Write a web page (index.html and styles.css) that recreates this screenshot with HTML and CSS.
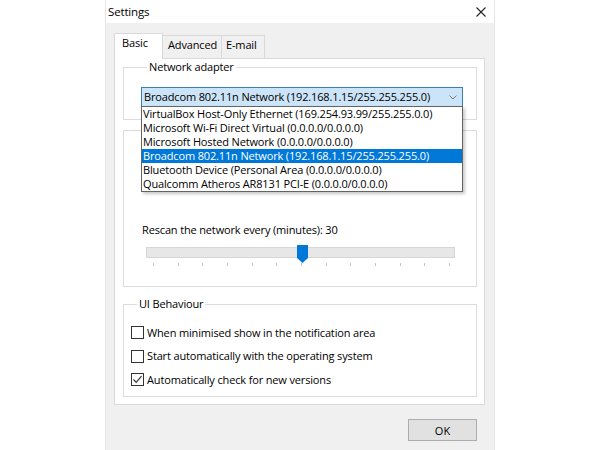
FILE: index.html
```
<!DOCTYPE html>
<html>
<head>
<meta charset="utf-8">
<link rel="stylesheet" href="styles.css">
</head>
<body>
<div class="window">
  <div class="titlebar">
    <span class="title">Settings</span>
    <svg class="close" width="10" height="10" viewBox="0 0 10 10"><path d="M0.5 0.5 L9.5 9.5 M9.5 0.5 L0.5 9.5" stroke="#222" stroke-width="1.1" fill="none"/></svg>
  </div>
  <div class="body">
    <div class="tabs">
      <div class="tab tab-basic active">Basic</div>
      <div class="tab tab-adv">Advanced</div>
      <div class="tab tab-mail">E-mail</div>
    </div>
    <div class="panel">
      <fieldset class="group group-adapter">
        <legend>Network adapter</legend>
        <div class="combo-wrap">
          <div class="combo">
            <span class="combo-text">Broadcom 802.11n Network (192.168.1.15/255.255.255.0)</span>
            <svg class="chev" width="8" height="5" viewBox="0 0 8 5"><path d="M0.5 0.5 L4 4 L7.5 0.5" stroke="#7a7a7a" stroke-width="1" fill="none"/></svg>
          </div>
          <ul class="dropdown">
            <li>VirtualBox Host-Only Ethernet (169.254.93.99/255.255.0.0)</li>
            <li>Microsoft Wi-Fi Direct Virtual (0.0.0.0/0.0.0.0)</li>
            <li>Microsoft Hosted Network (0.0.0.0/0.0.0.0)</li>
            <li class="selected">Broadcom 802.11n Network (192.168.1.15/255.255.255.0)</li>
            <li>Bluetooth Device (Personal Area (0.0.0.0/0.0.0.0)</li>
            <li>Qualcomm Atheros AR8131 PCI-E (0.0.0.0/0.0.0.0)</li>
          </ul>
        </div>
      </fieldset>
      <fieldset class="group group-scan">
        <legend>Scan</legend>
        <div class="rescan-label">Rescan the network every (minutes): 30</div>
        <div class="slider">
          <div class="track"></div>
          <div class="thumb" style="left:151px"><svg width="11" height="18" viewBox="0 0 11 18"><path d="M0 0 H11 V13 L5.5 18 L0 13 Z" fill="#0078d7"/></svg></div>
          <div class="ticks">
            <i></i><i></i><i></i><i></i><i></i><i></i><i></i><i></i><i></i><i></i><i></i><i></i><i></i>
          </div>
        </div>
      </fieldset>
      <fieldset class="group group-ui">
        <legend>UI Behaviour</legend>
        <label class="check"><span class="box"></span>When minimised show in the notification area</label>
        <label class="check"><span class="box"></span>Start automatically with the operating system</label>
        <label class="check"><span class="box"><svg width="11" height="11" viewBox="0 0 11 11"><path d="M1.5 5.5 L4.2 8.3 L9.5 2.2" stroke="#333" stroke-width="1.2" fill="none"/></svg></span>Automatically check for new versions</label>
      </fieldset>
    </div>
    <div class="footer">
      <button class="ok">OK</button>
    </div>
  </div>
</div>
</body>
</html>
```
FILE: styles.css
```
* { box-sizing: border-box; }
html, body { margin: 0; padding: 0; background: #fff; }
body {
  font-family: "Open Sans", "Noto Sans", sans-serif;
  font-size: 11px;
  letter-spacing: -0.15px;
  color: #000;
}
.window {
  margin-left: 105px;
  width: 390px;
  height: 450px;
  background: #f0f0f0;
  border-left: 1px solid #e6e6e6;
  border-right: 1px solid #e6e6e6;
}
.titlebar {
  height: 23px;
  background: #fff;
  display: flex;
  align-items: center;
  justify-content: space-between;
  padding: 0 8px 0 2px;
}
.title { line-height: 16px; font-size: 11.5px; }
.body {
  padding: 10px 9px 0 8px;
}
.tabs {
  display: flex;
  align-items: flex-end;
  height: 25px;
}
.tab {
  height: 23px;
  line-height: 18px;
  border: 1px solid #d9d9d9;
  border-bottom: none;
  background: #f0f0f0;
  padding-left: 5px;
  margin-left: -1px;
  white-space: nowrap;
}
.tab-basic { width: 49px; padding-left: 7px; margin-left: 0; }
.tab-adv { width: 60px; }
.tab-mail { width: 44px; padding-left: 4px; }
.tab.active {
  background: #fff;
  position: relative;
  z-index: 1;
  margin-bottom: -1px;
  height: 26px;
  line-height: 18px;
}
.panel {
  width: 371px;
  height: 347px;
  background: #fff;
  border: 1px solid #d9d9d9;
  padding: 0 7px 0 8px;
}
.group {
  margin: 0;
  padding: 0;
  border: 1px solid #dcdcdc;
  min-width: 0;
}
.group legend {
  margin-left: 6px;
  padding: 0 2px;
  line-height: 16px;
  height: 16px;
}
.group-adapter { padding: 12px 13px 12px 17px; }
.group-scan { margin-top: 2px; height: 165px; padding: 0 21px 0 22px; }
.group-ui { margin-top: 9px; height: 101px; padding: 9px 8px 0 7px; }

.combo-wrap { position: relative; }
.combo {
  height: 20px;
  border: 1px solid #3c7fb1;
  background: #cce4f7;
  display: flex;
  align-items: center;
  justify-content: space-between;
  padding: 0 5px 0 2px;
}
.combo-text { line-height: 16px; white-space: nowrap; }
.dropdown {
  position: absolute;
  top: 19px;
  left: 0;
  width: 322px;
  margin: 0;
  padding: 0;
  list-style: none;
  background: #fff;
  border: 1px solid #646464;
  box-shadow: 2px 2px 3px rgba(0,0,0,0.22);
  z-index: 5;
}
.dropdown li {
  height: 14px;
  line-height: 14px;
  padding-left: 1px;
  white-space: nowrap;
}
.dropdown li.selected { background: #0078d7; color: #fff; }

.rescan-label {
  margin-top: 84px;
  margin-left: -4px;
  line-height: 16px;
}
.slider {
  position: relative;
  margin-top: 9px;
}
.track {
  height: 11px;
  background: #e7e7e7;
  border: 1px solid #d6d6d6;
}
.thumb {
  position: absolute;
  top: -2px;
  line-height: 0;
}
.ticks {
  display: flex;
  justify-content: space-between;
  margin: 5px 5px 0 7px;
}
.ticks i {
  display: block;
  width: 1px;
  height: 3px;
  background: #c4c4c4;
}
.check {
  display: flex;
  align-items: center;
  height: 23.5px;
  line-height: 16px;
}
.box {
  width: 13px;
  height: 13px;
  border: 1px solid #333;
  margin-right: 3px;
  display: flex;
  align-items: center;
  justify-content: center;
  flex: none;
}
.footer {
  display: flex;
  justify-content: flex-end;
  padding: 14px 8px 0 0;
}
.ok {
  width: 69px;
  height: 22px;
  background: #e1e1e1;
  border: 1px solid #adadad;
  font: inherit;
  color: #000;
  padding: 0;
}
```
